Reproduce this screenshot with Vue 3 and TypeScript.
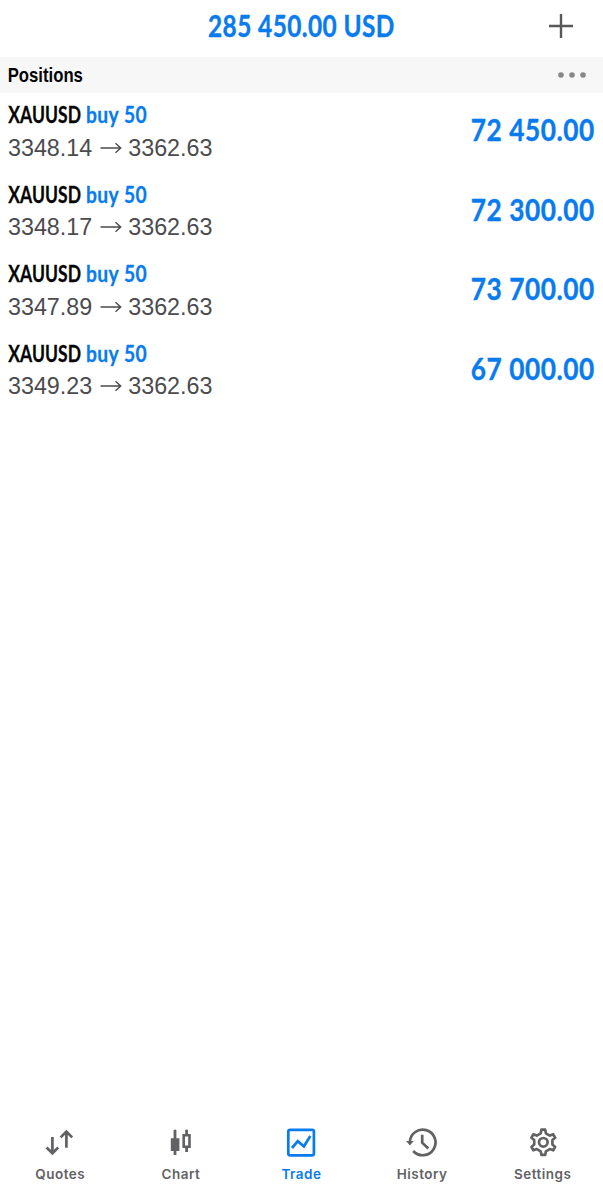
<script setup lang="ts">
interface Position {
  symbol: string
  side: string
  open: string
  current: string
  profit: string
}

const positions: Position[] = [
  { symbol: 'XAUUSD', side: 'buy 50', open: '3348.14', current: '3362.63', profit: '72 450.00' },
  { symbol: 'XAUUSD', side: 'buy 50', open: '3348.17', current: '3362.63', profit: '72 300.00' },
  { symbol: 'XAUUSD', side: 'buy 50', open: '3347.89', current: '3362.63', profit: '73 700.00' },
  { symbol: 'XAUUSD', side: 'buy 50', open: '3349.23', current: '3362.63', profit: '67 000.00' },
]
</script>

<template>
  <div class="screen">
    <header class="topbar">
      <svg class="total" width="190" height="57">
        <text transform="translate(1 36.8) scale(.8 1)" textLength="233" lengthAdjust="spacing">285 450.00 USD</text>
      </svg>
      <svg class="plus" width="26" height="26" viewBox="0 0 26 26">
        <path d="M13 1v24M1 13h24" />
      </svg>
    </header>

    <div class="section">
      <svg class="heading" width="90" height="36">
        <text transform="translate(-.3 25.1) scale(.84 1)" textLength="89.5" lengthAdjust="spacingAndGlyphs">Positions</text>
      </svg>
      <svg class="dots" width="28" height="6" viewBox="0 0 28 6">
        <circle cx="3" cy="3" r="2.8" /><circle cx="14" cy="3" r="2.8" /><circle cx="25" cy="3" r="2.8" />
      </svg>
    </div>

    <main class="list">
      <div v-for="(p, i) in positions" :key="i" class="row">
        <div class="info">
          <svg class="name" width="150" height="36">
            <text class="symbol" transform="translate(.2 30.4) scale(.77 1)" textLength="94.5" lengthAdjust="spacingAndGlyphs">{{ p.symbol }}</text>
            <text class="side" transform="translate(78 30.4) scale(.82 1)" textLength="74" lengthAdjust="spacing">{{ p.side }}</text>
          </svg>
          <div class="prices">
            <span>{{ p.open }}</span>
            <svg class="arrow" width="22" height="12" viewBox="0 0 22 12">
              <path d="M0.5 6H20.5M15.5 1.3L20.7 6L15.5 10.7" />
            </svg>
            <span>{{ p.current }}</span>
          </div>
        </div>
        <svg class="profit" width="126" height="60">
          <text transform="translate(1.8 47.8) scale(.86 1)" textLength="143.5" lengthAdjust="spacing">{{ p.profit }}</text>
        </svg>
      </div>
    </main>

    <nav class="tabs">
      <div class="tab">
        <svg width="32" height="32" viewBox="0 0 32 32" class="line">
          <path d="M8.400 10V26.500M2.600 20.500L8.400 26.300L14.200 20.500M22.400 20.700V4.500M16.600 10.400L22.400 4.600L28.200 10.400" />
        </svg>
        <span>Quotes</span>
      </div>
      <div class="tab">
        <svg width="32" height="32" viewBox="0 0 32 32">
          <path class="fill" d="M8.600 2.700h2.800v8.600h3V24h-3v4H8.600v-4H5.800V11.300h2.800z" />
          <path class="fill" fill-rule="evenodd" d="M20.200 2.700h2.800V7h2.800v14H23v4h-2.800v-4h-2.800V7h2.800zM20 9.500v9h3.200v-9z" />
        </svg>
        <span>Chart</span>
      </div>
      <div class="tab active">
        <svg width="32" height="32" viewBox="0 0 32 32" class="line">
          <rect x="3.300" y="2.800" width="25.600" height="25.600" rx="1.800" />
          <path d="M7 21L12.800 14.200L18.900 19.500L25.300 9" />
        </svg>
        <span>Trade</span>
      </div>
      <div class="tab">
        <svg width="32" height="32" viewBox="0 0 32 32" class="line">
          <path d="M3.900 15.500A12.800 12.800 0 1 1 7.200 24M16.200 7.800V15.600L22.300 21.500" />
          <path class="fill" d="M.1 14h7.600L3.900 18.600z" />
        </svg>
        <span>History</span>
      </div>
      <div class="tab">
        <svg width="32" height="32" viewBox="0 0 32 32" class="line gear">
          <g transform="translate(16.300 15.300)">
            <path
              d="M-1.900-12.600H1.900L2.600-9L6.490-6.750L9.960-7.950L11.860-4.650L9.090-2.250V2.250L11.860 4.650L9.960 7.950L6.490 6.750L2.600 9L1.900 12.600H-1.900L-2.600 9L-6.490 6.750L-9.960 7.950L-11.860 4.650L-9.090 2.250V-2.250L-11.860-4.650L-9.960-7.950L-6.490-6.750L-2.600-9Z"
            />
            <circle r="4.300" />
          </g>
        </svg>
        <span>Settings</span>
      </div>
    </nav>
  </div>
</template>

<style>
body {
  margin: 0;
  background: #fff;
}
</style>

<style scoped>
.screen {
  width: 603px;
  height: 1200px;
  display: flex;
  flex-direction: column;
  background: #fff;
  font-family: "Liberation Sans", Arial, sans-serif;
  overflow: hidden;
}
svg {
  display: block;
  flex: none;
  overflow: visible;
}
.topbar {
  height: 57px;
  display: grid;
  grid-template-columns: 1fr 190px 1fr;
  align-items: center;
}
.total {
  grid-column: 2;
}
.total text,
.profit text {
  font: 700 30.5px Lato, sans-serif;
  font-kerning: none;
  fill: #087bee;
  stroke: #087bee;
  stroke-width: 0.4;
}
.plus {
  justify-self: end;
  margin: 0 29px 5px 0;
  fill: none;
  stroke: #58585a;
  stroke-width: 2.4;
}
.section {
  height: 36px;
  display: flex;
  justify-content: space-between;
  background: #f7f7f7;
  padding: 0 17px 0 8px;
}
.heading text {
  font: 700 20.5px "Liberation Sans", sans-serif;
  fill: #050505;
}
.dots {
  margin-top: 15px;
  fill: #88888a;
}
.list {
  flex: 1;
}
.row {
  height: 79.5px;
  display: flex;
  justify-content: space-between;
  padding: 0 8px;
}
.name text {
  font: 700 23.5px Lato, sans-serif;
  font-kerning: none;
  stroke-width: 0.3;
}
.name .symbol {
  fill: #050505;
  stroke: #050505;
}
.name .side {
  fill: #087bee;
  stroke: #087bee;
}
.prices {
  display: flex;
  align-items: center;
  height: 38px;
  font-size: 23.3px;
  color: #4b4b4e;
}
.arrow {
  margin: 0 6px 1px 8px;
  fill: none;
  stroke: #4b4b4e;
  stroke-width: 1.4;
}
.tabs {
  height: 73px;
  display: grid;
  grid-template-columns: repeat(5, 1fr);
  color: #626264;
}
.tab {
  display: flex;
  flex-direction: column;
  align-items: center;
  gap: 5.5px;
  font: 600 13.5px/18px Inter, sans-serif;
  letter-spacing: 0.5px;
}
.active {
  color: #087bee;
}
.line {
  fill: none;
  stroke: currentColor;
  stroke-width: 2.7;
  stroke-linecap: butt;
}
.gear {
  stroke-linejoin: round;
}
.fill {
  fill: currentColor;
  stroke: none;
}
</style>
